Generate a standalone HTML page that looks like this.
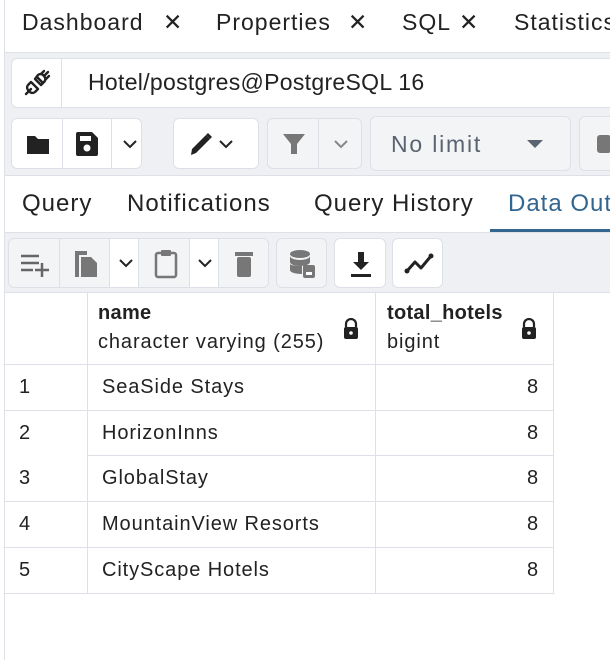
<!DOCTYPE html>
<html><head><style>
*{box-sizing:border-box;margin:0;padding:0}
html,body{width:610px;height:660px;overflow:hidden}
body{background:#fff;font-family:"Liberation Sans",sans-serif;color:#222;position:relative}
#w{position:absolute;left:0;top:0;width:610px;height:660px;overflow:hidden}
.a{position:absolute}
.t{font-size:23px;color:#222;white-space:nowrap;letter-spacing:1px}
.btn{position:absolute;background:#fff;border:1px solid #dde0e6;border-radius:6px}
.gbtn{position:absolute;background:#f3f4f6;border:1px solid #dde0e6;border-radius:6px}
.vl{position:absolute;top:0;bottom:0;width:1px;background:#dde0e6}
.cell{position:absolute;font-size:20px;color:#222;white-space:nowrap;letter-spacing:0.9px}
.hl{position:absolute;height:1px;background:#dde0e6}
.vv{position:absolute;width:1px;background:#dde0e6}
</style></head><body><div id="w">
<div class="a" style="left:4px;top:0;width:1px;height:660px;background:#dde0e6"></div>
<div class="a t" style="left:22px;top:9px">Dashboard</div><div class="a t" style="left:163px;top:9px">✕</div>
<div class="a t" style="left:216px;top:9px">Properties</div><div class="a t" style="left:348px;top:9px">✕</div>
<div class="a t" style="left:402px;top:9px">SQL</div><div class="a t" style="left:459px;top:9px">✕</div>
<div class="a t" style="left:514px;top:9px">Statistics</div>
<div class="a" style="left:5px;top:52px;width:605px;height:123px;background:#eef0f4;border-top:1px solid #dde0e6"></div>
<div class="btn" style="left:11px;top:58px;width:610px;height:50px">
 <div class="vl" style="left:49px"></div>
 <svg class="a" style="left:11px;top:10px" width="28" height="28" viewBox="0 0 28 28"><g fill="none" stroke="#222" stroke-width="2.4" stroke-linecap="round" stroke-linejoin="round"><path d="M3 25l5-5"/><path d="M8 13l7 7-3 3a4 4 0 0 1-6-1l-1-1a4 4 0 0 1 0-5z"/><path d="M14 8l6 6"/><path d="M12 10l6 6 3-3a4 4 0 0 0 0-6l-1-1a4 4 0 0 0-5 0z"/><path d="M21 7l4-4M18 5l3-3M23 10l3-3"/></g></svg>
 <div class="a t" style="left:76px;top:10px;letter-spacing:0.3px">Hotel/postgres@PostgreSQL 16</div>
</div>
<div class="btn" style="left:11px;top:118px;width:131px;height:51px">
 <div class="vl" style="left:50px"></div><div class="vl" style="left:99px"></div>
 <svg class="a" style="left:13px;top:13px" width="26" height="24"><path d="M2 4h8l3 3h11v15H2z" fill="#222"/></svg>
 <svg class="a" style="left:63px;top:12px" width="24" height="26"><path d="M1 3a2 2 0 0 1 2-2h14l6 6v16a2 2 0 0 1-2 2H3a2 2 0 0 1-2-2z" fill="#222"/><rect x="5" y="5" width="11" height="5" fill="#fff"/><circle cx="12" cy="17" r="3.5" fill="#fff"/></svg>
 <svg class="a" style="left:110px;top:20px" width="16" height="10"><path d="M2 2l6 6 6-6" fill="none" stroke="#222" stroke-width="2"/></svg>
</div>
<div class="btn" style="left:173px;top:118px;width:86px;height:51px">
 <svg class="a" style="left:14px;top:12px" width="28" height="26"><path d="M3 24l1-6L18 4l4 4L8 22z" fill="#222"/><path d="M20 2l4 4-2 2-4-4z" fill="#222"/></svg>
 <svg class="a" style="left:44px;top:20px" width="16" height="10"><path d="M2 2l6 6 6-6" fill="none" stroke="#222" stroke-width="2"/></svg>
</div>
<div class="gbtn" style="left:267px;top:118px;width:95px;height:51px">
 <div class="vl" style="left:50px"></div>
 <svg class="a" style="left:14px;top:13px" width="24" height="24"><path d="M1 2h22l-8 10v10h-6V12z" fill="#777"/></svg>
 <svg class="a" style="left:65px;top:20px" width="16" height="10"><path d="M2 2l6 6 6-6" fill="none" stroke="#888" stroke-width="2"/></svg>
</div>
<div class="gbtn" style="left:370px;top:116px;width:201px;height:55px">
 <div class="a t" style="left:20px;top:14px;color:#5a6370;letter-spacing:1.8px">No limit</div>
 <svg class="a" style="left:155px;top:22px" width="18" height="10"><path d="M1 1h16l-8 8z" fill="#5a6370"/></svg>
</div>
<div class="gbtn" style="left:579px;top:116px;width:31px;height:55px;border-right:none;border-radius:6px 0 0 6px"><div class="a" style="left:17px;top:18px;width:14px;height:18px;background:#777;border-radius:3px"></div></div>
<div class="a" style="left:5px;top:175px;width:605px;height:1px;background:#dde0e6"></div>
<div class="a t" style="left:22px;top:190px;font-size:24px">Query</div>
<div class="a t" style="left:127px;top:190px;font-size:24px">Notifications</div>
<div class="a t" style="left:314px;top:190px;font-size:24px">Query History</div>
<div class="a" style="left:508px;top:190px;width:102px;overflow:hidden"><div class="t" style="font-size:24px;color:#326690">Data Output</div></div>
<div class="a" style="left:490px;top:229px;width:120px;height:3px;background:#326690"></div>
<div class="a" style="left:5px;top:232px;width:605px;height:60px;background:#eef0f4;border-top:1px solid #dde0e6"></div>
<div class="gbtn" style="left:8px;top:238px;width:261px;height:50px">
 <div class="vl" style="left:50px;background:#dde0e6"></div>
 <div class="a" style="left:100px;top:0;width:30px;height:48px;background:#fff;border-left:1px solid #dde0e6;border-right:1px solid #dde0e6"></div>
 <div class="a" style="left:180px;top:0;width:30px;height:48px;background:#fff;border-left:1px solid #dde0e6;border-right:1px solid #dde0e6"></div>
 <svg class="a" style="left:10px;top:14px" width="32" height="24"><g stroke="#666" stroke-width="2.5"><path d="M2 3h18M2 10h18M2 17h12M16 17h14M23 10v14"/></g></svg>
 <svg class="a" style="left:62px;top:10px" width="28" height="30"><path d="M4 2h12v4H8v22H4z" fill="#777"/><path d="M10 8h10l6 6v14H10z" fill="#777"/></svg>
 <svg class="a" style="left:109px;top:19px" width="16" height="10"><path d="M2 2l6 6 6-6" fill="none" stroke="#222" stroke-width="2"/></svg>
 <svg class="a" style="left:144px;top:9px" width="26" height="32"><rect x="3" y="5" width="20" height="24" rx="2" fill="none" stroke="#777" stroke-width="2.5"/><rect x="8" y="2" width="10" height="6" rx="1" fill="#777"/></svg>
 <svg class="a" style="left:188px;top:19px" width="16" height="10"><path d="M2 2l6 6 6-6" fill="none" stroke="#222" stroke-width="2"/></svg>
 <svg class="a" style="left:225px;top:11px" width="20" height="28"><rect x="1" y="2" width="18" height="4" fill="#777"/><rect x="3" y="7" width="14" height="20" rx="2" fill="#777"/></svg>
</div>
<div class="gbtn" style="left:276px;top:238px;width:51px;height:50px">
 <svg class="a" style="left:12px;top:10px" width="28" height="30"><ellipse cx="11" cy="5" rx="10" ry="4" fill="#777"/><path d="M1 7v6c0 2 4 4 10 4s10-2 10-4V7c0 2-4 4-10 4S1 9 1 7z" fill="#777"/><path d="M1 15v6c0 2 4 4 12 4v-8c-7 0-12-1-12-2z" fill="#777"/><rect x="14" y="16" width="12" height="13" rx="2" fill="#777"/><rect x="17" y="23" width="6" height="3" fill="#fff"/></svg>
</div>
<div class="btn" style="left:334px;top:238px;width:52px;height:50px">
 <svg class="a" style="left:14px;top:11px" width="24" height="28"><path d="M9 2h6v10h5l-8 8-8-8h5z" fill="#222"/><rect x="2" y="24" width="20" height="3" fill="#222"/></svg>
</div>
<div class="btn" style="left:392px;top:238px;width:51px;height:50px">
 <svg class="a" style="left:10px;top:13px" width="32" height="24"><path d="M4 19l8-9 6 6 10-12" fill="none" stroke="#222" stroke-width="3" stroke-linejoin="round"/><circle cx="4" cy="19" r="2.5" fill="#222"/><circle cx="28" cy="4" r="2.5" fill="#222"/></svg>
</div>
<div class="a" style="left:5px;top:292px;width:605px;height:1px;background:#dde0e6"></div>
<div class="vv" style="left:87px;top:292px;height:301px"></div>
<div class="vv" style="left:375px;top:292px;height:301px"></div>
<div class="vv" style="left:553px;top:292px;height:301px"></div>
<div class="hl" style="left:5px;top:364px;width:549px"></div>
<div class="hl" style="left:5px;top:410px;width:549px"></div>
<div class="hl" style="left:87px;top:455px;width:467px"></div>
<div class="hl" style="left:5px;top:501px;width:549px"></div>
<div class="hl" style="left:5px;top:547px;width:549px"></div>
<div class="hl" style="left:5px;top:593px;width:549px"></div>
<div class="cell" style="left:98px;top:302px;font-weight:bold;letter-spacing:0.3px">name</div>
<div class="cell" style="left:98px;top:331px">character varying (255)</div>
<div class="cell" style="left:387px;top:302px;font-weight:bold;letter-spacing:0.3px">total_hotels</div>
<div class="cell" style="left:387px;top:331px">bigint</div>
<svg class="a" style="left:342px;top:318px" width="18" height="22"><path d="M4 9V6a5 5 0 0 1 10 0v3" fill="none" stroke="#222" stroke-width="2.2"/><rect x="2" y="9" width="14" height="12" rx="2" fill="#222"/><circle cx="9" cy="15" r="1.8" fill="#fff"/></svg>
<svg class="a" style="left:520px;top:318px" width="18" height="22"><path d="M4 9V6a5 5 0 0 1 10 0v3" fill="none" stroke="#222" stroke-width="2.2"/><rect x="2" y="9" width="14" height="12" rx="2" fill="#222"/><circle cx="9" cy="15" r="1.8" fill="#fff"/></svg>
<div class="cell" style="left:19px;top:376px">1</div><div class="cell" style="left:102px;top:376px">SeaSide Stays</div><div class="cell" style="left:527px;top:376px">8</div>
<div class="cell" style="left:19px;top:422px">2</div><div class="cell" style="left:102px;top:422px">HorizonInns</div><div class="cell" style="left:527px;top:422px">8</div>
<div class="cell" style="left:19px;top:467px">3</div><div class="cell" style="left:102px;top:467px">GlobalStay</div><div class="cell" style="left:527px;top:467px">8</div>
<div class="cell" style="left:19px;top:513px">4</div><div class="cell" style="left:102px;top:513px">MountainView Resorts</div><div class="cell" style="left:527px;top:513px">8</div>
<div class="cell" style="left:19px;top:559px">5</div><div class="cell" style="left:102px;top:559px">CityScape Hotels</div><div class="cell" style="left:527px;top:559px">8</div>
</div></body></html>
